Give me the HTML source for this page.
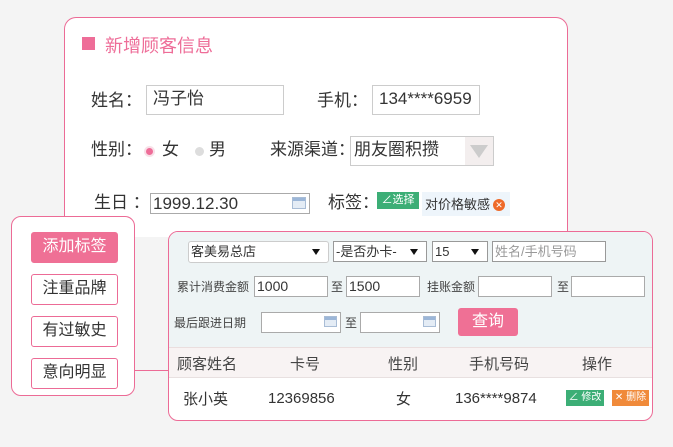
<!DOCTYPE html>
<html><head><meta charset="utf-8"><style>
*{box-sizing:border-box;margin:0;padding:0}
body{width:673px;height:447px;background:#f4f4f4;position:relative;overflow:hidden;font-family:"Liberation Sans","Noto Sans CJK SC",sans-serif;color:#333}
.a{position:absolute}
.card{left:64px;top:17px;width:504px;height:220px;background:#fff;border:1px solid #ec6b96;border-bottom:none;border-radius:12px 12px 0 0}
.inp{position:absolute;border:1px solid #ccc;background:#fff;font-size:17px;padding-left:6px;line-height:26px}
.lbl{position:absolute;font-size:17px;color:#333;line-height:20px}
.tagbox{left:11px;top:216px;width:124px;height:180px;background:#fff;border:1px solid #ec6b96;border-radius:10px}
.tb{position:absolute;left:19px;width:87px;height:31px;border:1px solid #ec6b96;border-radius:3px;font-size:16px;text-align:center;line-height:28px;background:#fff}
.panel{left:168px;top:231px;width:485px;height:190px;background:#fff;border:1px solid #ec6b96;border-radius:10px;overflow:hidden}
.f{position:absolute;border:1px solid #aaa;background:#fff;height:21px;font-size:13px;line-height:19px;padding-left:2px}
.s{position:absolute;font-size:12px;color:#444}
.cal{position:absolute;right:3px;top:4px;width:13px;height:11px;background:linear-gradient(#9bb6d8 0 3px,#e4ecf5 3px);border:1px solid #a9bdd6}
.tri{position:absolute;right:8px;top:7px;border-left:4px solid transparent;border-right:4px solid transparent;border-top:6px solid #111}
</style></head><body>
<div class="a card">
 <div class="a" style="left:17px;top:19px;width:13px;height:13px;background:#ee6d98"></div>
 <div class="a" style="left:40px;top:14px;font-size:18px;color:#ee6d98">新增顾客信息</div>
 <div class="lbl" style="left:26px;top:73px">姓名：</div>
 <div class="inp" style="left:81px;top:67px;width:138px;height:30px">冯子怡</div>
 <div class="lbl" style="left:252px;top:73px">手机：</div>
 <div class="inp" style="left:307px;top:67px;width:108px;height:30px">134****6959</div>
 <div class="lbl" style="left:26px;top:122px">性别：</div>
 <div class="a" style="left:81px;top:130px;width:7px;height:7px;border-radius:50%;background:#ee6d98;box-shadow:0 0 0 2px #f8e0e8"></div>
 <div class="lbl" style="left:97px;top:122px">女</div>
 <div class="a" style="left:130px;top:129px;width:9px;height:9px;border-radius:50%;background:#ddd"></div>
 <div class="lbl" style="left:144px;top:122px">男</div>
 <div class="lbl" style="left:205px;top:122px">来源渠道：</div>
 <div class="inp" style="left:285px;top:118px;width:144px;height:30px;padding-left:3px">朋友圈积攒<div class="a" style="right:0;top:0;width:28px;height:28px;background:#f3eeee"><div class="a" style="left:5px;top:8px;border-left:9px solid transparent;border-right:9px solid transparent;border-top:13px solid #ccc"></div></div></div>
 <div class="lbl" style="left:29px;top:175px">生日 ：</div>
 <div class="inp" style="left:85px;top:175px;width:160px;height:21px;border-color:#aaa;line-height:19px;font-size:17px;padding-left:2px">1999.12.30<div class="cal" style="top:3px;width:14px;height:12px"></div></div>
 <div class="lbl" style="left:263px;top:175px">标签：</div>
 <div class="a" style="left:312px;top:174px;width:42px;height:17px;background:#3cae76;color:#fff;font-size:11px;line-height:17px;text-align:center">∠选择</div>
 <div class="a" style="left:357px;top:174px;width:88px;height:24px;background:#eef5fb;font-size:13px;line-height:26px;padding-left:3px">对价格敏感<span style="display:inline-block;width:12px;height:12px;border-radius:50%;background:#ee6a2a;color:#fff;font-size:9px;line-height:12px;text-align:center;margin-left:3px;vertical-align:1px">✕</span></div>
</div>
<div class="a" style="left:134px;top:370px;width:35px;height:1px;background:#ec6b96"></div>
<div class="a tagbox">
 <div class="tb" style="top:15px;background:#ef7095;color:#fff;border-color:#ef7095">添加标签</div>
 <div class="tb" style="top:57px">注重品牌</div>
 <div class="tb" style="top:99px">有过敏史</div>
 <div class="tb" style="top:141px">意向明显</div>
</div>
<div class="a panel">
 <div class="a" style="left:0;top:0;width:485px;height:115px;background:#eef4f5"></div>
 <div class="f" style="left:19px;top:9px;width:141px;height:22px;border-color:#ccc;border-radius:3px">客美易总店<div class="tri"></div></div>
 <div class="f" style="left:164px;top:9px;width:94px;border-color:#999">-是否办卡-<div class="tri"></div></div>
 <div class="f" style="left:263px;top:9px;width:56px;border-color:#999">15<div class="tri"></div></div>
 <div class="f" style="left:323px;top:9px;width:114px;color:#999;border-color:#999">姓名/手机号码</div>
 <div class="s" style="left:8px;top:46px">累计消费金额</div>
 <div class="f" style="left:85px;top:44px;width:74px;font-size:14px">1000</div>
 <div class="s" style="left:162px;top:46px">至</div>
 <div class="f" style="left:177px;top:44px;width:74px;font-size:14px">1500</div>
 <div class="s" style="left:258px;top:46px">挂账金额</div>
 <div class="f" style="left:309px;top:44px;width:74px"></div>
 <div class="s" style="left:388px;top:46px">至</div>
 <div class="f" style="left:402px;top:44px;width:74px"></div>
 <div class="s" style="left:5px;top:82px">最后跟进日期</div>
 <div class="f" style="left:92px;top:80px;width:80px"><div class="cal" style="top:3px"></div></div>
 <div class="s" style="left:176px;top:82px">至</div>
 <div class="f" style="left:191px;top:80px;width:80px"><div class="cal" style="top:3px"></div></div>
 <div class="a" style="left:289px;top:76px;width:60px;height:28px;background:#ef7095;border-radius:3px;color:#fff;font-size:16px;line-height:28px;text-align:center">查询</div>
 <div class="a" style="left:0;top:115px;width:485px;height:31px;background:#f8f3f3;border-top:1px solid #eadede;border-bottom:1px solid #e8e0e0"></div>
 <div class="a" style="top:121px;left:8px;font-size:15px;color:#444">顾客姓名</div>
 <div class="a" style="top:121px;left:121px;font-size:15px;color:#444">卡号</div>
 <div class="a" style="top:121px;left:219px;font-size:15px;color:#444">性别</div>
 <div class="a" style="top:121px;left:300px;font-size:15px;color:#444">手机号码</div>
 <div class="a" style="top:121px;left:413px;font-size:15px;color:#444">操作</div>
 <div class="a" style="top:156px;left:14px;font-size:15px">张小英</div>
 <div class="a" style="top:158px;left:99px;font-size:15px">12369856</div>
 <div class="a" style="top:156px;left:227px;font-size:15px">女</div>
 <div class="a" style="top:158px;left:286px;font-size:15px">136****9874</div>
 <div class="a" style="top:158px;left:397px;width:38px;height:16px;background:#3cae76;color:#fff;font-size:10px;line-height:16px;text-align:center">∠ 修改</div>
 <div class="a" style="top:158px;left:443px;width:37px;height:16px;background:#f08a3a;color:#fff;font-size:10px;line-height:16px;text-align:center">✕ 删除</div>
</div>
</body></html>
